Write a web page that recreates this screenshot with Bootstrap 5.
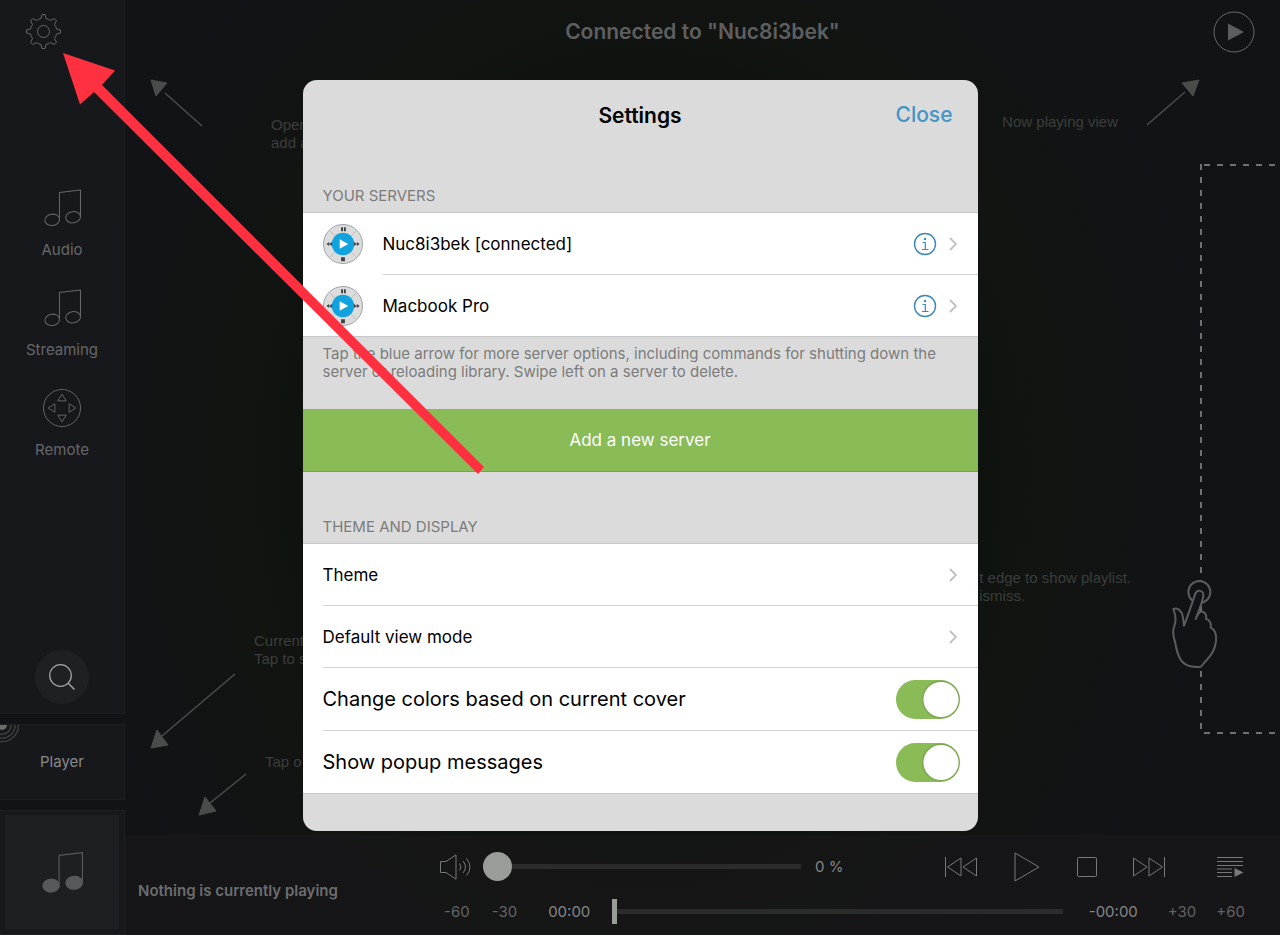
<!DOCTYPE html>
<html lang="en">
<head>
<meta charset="utf-8">
<meta name="viewport" content="width=device-width, initial-scale=1">
<title>Settings</title>
<link href="https://cdn.jsdelivr.net/npm/bootstrap@5.3.0/dist/css/bootstrap.min.css" rel="stylesheet">
<style>
  body { font-family: Inter, "Liberation Sans", sans-serif; font-size: 15px; line-height: 18px; background: #121316; color: #66676a; overflow-x: hidden; }
  svg { display: block; flex: none; }
  .app { background: radial-gradient(ellipse 44% 70% at 50% 50%, #0d120d 50%, #111411 72%, #121316); }
  .line-art { fill: none; stroke: currentColor; stroke-width: 1; stroke-linejoin: round; }
  .plain { background: none; border: 0; padding: 0; color: inherit; text-decoration: none; }

  /* Left rail */
  .rail { width: 125px; gap: 10px; flex: none; }
  .panel { background: #17181c; border: 1px solid #1e1f23; border-left: 0; }
  .rail-top { border-top: 0; padding-bottom: 9px; }
  .rail-gear { margin: 13px 0 0 25px; }
  .rail-nav { padding-top: 139px; }
  .rail-nav a { height: 100px; gap: 14px; }
  .search-btn { width: 54px; height: 54px; background: #1f2024; color: #a2a2a4; }
  .rail-player { height: 76px; color: #88898c; }
  .rail-player svg { position: absolute; left: 0; top: 0; }
  .rail-cover { height: 125px; padding: 4px 5px 5px 5px; }
  .cover-art { background: #1e1f23; color: #58595c; }

  /* Stage */
  .stage-head { height: 63px; padding: 0 25px; }
  .stage-head h1 { font-size: 21px; line-height: 26px; color: #5e5f61; }
  .side { width: 42px; }
  .hint { position: absolute; font-family: "Liberation Sans", Arial, sans-serif; font-size: 15px; line-height: 18px; color: #3b3e3c; white-space: nowrap; }
  .arrow { position: absolute; color: #4a4b4b; fill: currentColor; stroke: currentColor; }
  .drop-zone { position: absolute; right: 0; top: 164px; bottom: 201px; width: 80px;
    background:
      repeating-linear-gradient(180deg, #6f7072 0 6px, transparent 6px 13px) left top / 2px 100% no-repeat,
      repeating-linear-gradient(90deg, transparent 0 4px, #6f7072 4px 10px, transparent 10px 13px) left top / 100% 2px no-repeat,
      repeating-linear-gradient(90deg, transparent 0 4px, #6f7072 4px 10px, transparent 10px 13px) left bottom / 100% 2px no-repeat; }
  .hand { position: absolute; right: 60px; bottom: 265px; color: #5b5c60; }

  /* Transport bar */
  .transport { height: 100px; padding: 0 35px 0 13px; background: rgba(25, 24, 26, .6); }
  .track { width: 302px; padding-top: 47px; font-weight: 600; flex: none; color: #6c6d6e; }
  .controls { padding-top: 9px; }
  .ctl-row { height: 45px; }
  .ctl { color: #77787a; }
  .skip { color: #626365; }
  .clock { color: #858687; }
  .slide { appearance: none; background: none; height: 30px; margin: 0; min-width: 0; flex: 1 1 0; }
  .slide::-webkit-slider-runnable-track { height: 5px; background: #2a2b2b; }
  .slide::-webkit-slider-thumb { appearance: none; background: #9a9c99; border: 0; }
  .volume::-webkit-slider-thumb { width: 29px; height: 29px; border-radius: 50%; margin-top: -12px; }
  .seek::-webkit-slider-thumb { width: 5px; height: 25px; margin-top: -10px; }

  /* Settings sheet */
  .sheet { max-width: 675px; margin: 80px auto 105px; }
  .sheet .modal-content { background: #dbdbdb; border: 0; border-radius: 14px; overflow: hidden; color: #000; padding-bottom: 37px; }
  .sheet-head { height: 71px; padding: 0 25px; }
  .sheet-head h2 { font-size: 21px; line-height: 26px; }
  .sheet-head .side-col { flex: 1 1 0; }
  .close-link { color: #4595c5; font-weight: 500; font-size: 21px; }
  .group-title { font-size: 15px; line-height: 18px; font-weight: 400; color: #7c7c7c; margin: 0; padding: 36px 20px 7px; }
  .group-title.later { padding-top: 46px; }
  .group { background: #fff; border: solid #c8c8ca; border-width: 1px 0; font-size: 17px; line-height: 22px; }
  .entry { height: 62px; padding-right: 18px; border-bottom: 1px solid #d4d4d6; }
  .entry.tall { height: 63px; }
  .server { padding-left: 20px; }
  .server:last-child .entry { height: 61px; border-bottom: 0; }
  .option { margin-left: 20px; color: #000; text-decoration: none; }
  .option:last-child { height: 62px; border-bottom: 0; }
  .big { font-size: 20px; }
  .chev { color: #c0c0c4; margin-right: 3px; }
  .info { color: #3c88b4; margin-right: 12px; }
  .note { font-size: 15px; line-height: 18px; color: #7b7b7b; padding: 8px 20px 28px; margin: 0; }
  .add-btn { height: 63px; background: #89bb56; border: 0; border-bottom: 1px solid #78a04f; color: #fff; font-size: 17px; }
  .entry.form-switch { padding-left: 0; }
  .form-switch .form-check-input.toggle { width: 64px; height: 39px; margin: 0; border: 0; border-radius: 20px; background: radial-gradient(circle at 45px 50%, #fff 17px, #7ea552 18px, #89bb56 20px); }
  .pointer { position: absolute; left: 0; top: 0; z-index: 1060; pointer-events: none; }
</style>
</head>
<body>
<svg class="d-none">
  <symbol id="note" viewBox="0 0 36 36">
    <path d="M15 28V3L35.500 .5V26"/><ellipse cx="8" cy="29.500" rx="7.200" ry="5.500" transform="rotate(-8 8 29.500)"/><ellipse cx="28.300" cy="27" rx="7.200" ry="5.500" transform="rotate(-8 28.300 27)"/>
  </symbol>
  <symbol id="server" viewBox="0 0 42 42">
    <circle cx="21" cy="21" r="20.500" fill="#dcdcdc" stroke="#9aa0a4"/>
    <path d="M7 7l6 6M35 7l-6 6M7 35l6-6M35 35l-6-6" stroke="#b9bdbf"/>
    <circle cx="21" cy="21" r="11.800" fill="#11a3de"/><path d="M17.500 16v10l9-5z" fill="#fff"/>
    <path d="M19 3.500h2v4h-2zM22 3.500h2v4h-2zM19 35h4v4h-4zM3.500 21l3-2v4zM6.500 21l3-2v4zM38.500 21l-3-2v4zM35.500 21l-3-2v4z" fill="#3f4143"/>
  </symbol>
  <symbol id="info" viewBox="0 0 24 24">
    <circle cx="12" cy="12" r="10.500" fill="none" stroke="currentColor" stroke-width="1.400"/>
    <circle cx="12" cy="7" r="1.200" fill="currentColor"/><path d="M9.500 10.500h2.800v7M9 17.500h6.500" fill="none" stroke="currentColor" stroke-width="1.200"/>
  </symbol>
  <symbol id="chev" viewBox="0 0 8 14"><path d="M1 1l6 6-6 6" fill="none" stroke="currentColor" stroke-width="1.800"/></symbol>
</svg>

<div class="app d-flex min-vh-100 position-relative overflow-hidden">
  <aside class="rail d-flex flex-column">
    <div class="panel rail-top d-flex flex-column flex-grow-1">
      <button class="plain rail-gear align-self-start" aria-label="Settings">
        <svg class="line-art" width="37" height="37" viewBox="-18.500 -18.500 37 37"><circle r="6"/><path d="M-2.500-13 L-1.500-17H1.500L2.500-13Q5-12.500 7-11L10.800-13 13-10.800 11-7Q12.500-5 13-2.500L17-1.500V1.500L13 2.500Q12.500 5 11 7L13 10.800 10.800 13 7 11Q5 12.500 2.500 13L1.500 17H-1.500L-2.500 13Q-5 12.500-7 11L-10.800 13-13 10.800-11 7Q-12.500 5-13 2.500L-17 1.500V-1.500L-13-2.500Q-12.500-5-11-7L-13-10.800-10.800-13-7-11Q-5-12.500-2.500-13Z"/></svg>
      </button>
      <nav class="rail-nav d-flex flex-column">
        <a href="#" class="plain d-flex flex-column align-items-center"><svg class="line-art" width="37" height="38"><use href="#note"/></svg>Audio</a>
        <a href="#" class="plain d-flex flex-column align-items-center"><svg class="line-art" width="37" height="38"><use href="#note"/></svg>Streaming</a>
        <a href="#" class="plain d-flex flex-column align-items-center"><svg class="line-art" width="40" height="38" viewBox="0 0 40 40"><circle cx="20" cy="20" r="19.500"/><path d="M20 5.500l4.500 7h-9zM20 34.500l4.500-7h-9zM5.500 20l7-4.500v9zM34.500 20l-7-4.500v9z"/></svg>Remote</a>
      </nav>
      <button class="plain search-btn rounded-circle mt-auto mx-auto d-flex align-items-center justify-content-center" aria-label="Search">
        <svg class="line-art" width="28" height="28" viewBox="0 0 28 28"><circle cx="12.500" cy="12.500" r="10.800" stroke-width="1.300"/><path d="M20 20l6.500 6.500" stroke-width="1.500"/></svg>
      </button>
    </div>
    <button class="panel rail-player position-relative p-0 text-center">
      <svg width="20" height="20" fill="none"><circle cx="2" cy="0" r="5" fill="#6b6c6b"/><path d="M11 0a9 9 0 0 1-11 9M15 0a13 13 0 0 1-15 13M18.500 0A16.500 16.500 0 0 1 0 16.500" stroke="#3d3f3e" stroke-width="1.500"/></svg>
      Player
    </button>
    <div class="panel rail-cover d-flex">
      <div class="cover-art flex-grow-1 d-flex align-items-center justify-content-center">
        <svg class="line-art" width="41" height="41" viewBox="0 0 36 36"><use href="#note" width="36" height="36"/><ellipse cx="8" cy="29.500" rx="7" ry="5.500" fill="currentColor"/><ellipse cx="28.300" cy="27" rx="7" ry="5.500" fill="currentColor"/></svg>
      </div>
    </div>
  </aside>

  <div class="d-flex flex-column flex-grow-1">
    <header class="stage-head d-flex align-items-center">
      <span class="side"></span>
      <h1 class="flex-grow-1 text-center fw-semibold m-0">Connected to "Nuc8i3bek"</h1>
      <button class="plain side" aria-label="Now playing">
        <svg width="42" height="42" viewBox="0 0 42 42"><circle cx="21" cy="21" r="20" class="line-art"/><path d="M15 12.500v17l16-8.500z" fill="#5c5d5f"/></svg>
      </button>
    </header>
    <main class="flex-grow-1"></main>
    <footer class="transport d-flex">
      <div class="track">Nothing is currently playing</div>
      <div class="controls flex-grow-1">
        <div class="ctl-row ctl d-flex align-items-center">
          <button class="plain me-2 pe-1" aria-label="Mute"><svg class="line-art" width="31" height="26" viewBox="0 0 31 26"><path d="M.5 7.500H6L16 .8V25.200L6 18.500H.5zM19.500 9.500q3 3.500 0 7M23 7q5 6 0 12M26.500 4.500q7 8.500 0 17"/></svg></button>
          <input class="slide volume" type="range" min="0" max="100" value="0" aria-label="Volume">
          <span class="clock text-nowrap" style="padding-left:14px;width:144px">0 %</span>
          <button class="plain" aria-label="Previous"><svg class="line-art" width="32" height="22" viewBox="0 0 32 22"><path d="M.5 1v20M16 2v18L2.500 11zM31.500 2v18L18 11z"/></svg></button>
          <button class="plain" style="margin-left:37px" aria-label="Play"><svg class="line-art" width="26" height="30" viewBox="0 0 26 30"><path d="M1 1v28l24-14z"/></svg></button>
          <button class="plain" style="margin-left:37px" aria-label="Stop"><svg class="line-art" width="20" height="20" viewBox="0 0 20 20"><rect x=".5" y=".5" width="19" height="19" rx="1"/></svg></button>
          <button class="plain" style="margin-left:36px" aria-label="Next"><svg class="line-art" width="32" height="22" viewBox="0 0 32 22"><path d="M31.500 1v20M.5 2v18L14 11zM16 2v18L29.500 11z"/></svg></button>
          <button class="plain" style="margin-left:52px" aria-label="Queue"><svg width="28" height="22" viewBox="0 0 28 22"><path d="M0 1.500h26M0 5.500h26M0 9.500h26M0 13h15M0 16.500h15M0 20.500h15" stroke="currentColor" stroke-width="1.200"/><path d="M17.500 12v9l9-4.500z" fill="currentColor"/></svg></button>
        </div>
        <div class="ctl-row skip d-flex align-items-center text-nowrap">
          <button class="plain ms-1">-60</button>
          <button class="plain" style="margin-left:22px">-30</button>
          <span class="clock" style="margin:0 22px 0 31px">00:00</span>
          <input class="slide seek" type="range" min="0" max="100" value="0" aria-label="Position">
          <span class="clock" style="margin-left:26px">-00:00</span>
          <button class="plain" style="margin-left:30px">+30</button>
          <button class="plain" style="margin-left:20px">+60</button>
        </div>
      </div>
    </footer>
  </div>

  <!-- First-run coach marks over the stage -->
  <div class="hint" style="left:271px;top:116px">Open<br>add a</div>
  <svg class="arrow" style="left:150px;top:79px" width="53" height="49"><path d="M15 14L52 47" stroke-width="1.600"/><path d="M1 1l16 3-11 13z"/></svg>
  <div class="hint" style="right:162px;top:113px">Now playing view</div>
  <svg class="arrow" style="right:80px;top:79px" width="54" height="48"><path d="M39 13L1 46" stroke-width="1.600"/><path d="M53 1L36 4 47 17z"/></svg>
  <div class="hint" style="left:254px;bottom:267px">Current<br>Tap to s</div>
  <svg class="arrow" style="left:150px;bottom:186px" width="86" height="76"><path d="M12 63L85 1" stroke-width="1.600"/><path d="M1 75L7 57 18 72z"/></svg>
  <div class="hint" style="left:265px;bottom:164px">Tap o</div>
  <svg class="arrow" style="left:198px;bottom:119px" width="50" height="43"><path d="M12 30L48 1" stroke-width="1.600"/><path d="M1 42L7 24 18 38z"/></svg>
  <div class="drop-zone"></div>
  <svg class="hand" width="50" height="92" viewBox="870 115 150 276" stroke="currentColor" stroke-width="6" fill="#121316" stroke-linejoin="round" stroke-linecap="round"><circle cx="958" cy="157" r="33"/><path d="M912 258C925 225 935 195 945 165C950 148 972 150 970 170C965 195 955 215 947 238L955 222C965 208 982 220 978 238C990 240 994 252 992 264C1005 270 1010 285 1008 305C1004 340 985 355 972 370Q965 380 962 381C935 384 915 378 903 362C890 340 888 325 886 310C880 290 878 285 880 270C888 245 890 235 880 208C890 203 900 210 906 222C910 232 910 245 912 258"/></svg>
  <div class="hint" style="right:149px;bottom:330px">t edge to show playlist.<br>ismiss.</div>

  <div class="modal d-block position-absolute" role="dialog" aria-labelledby="sheet-title">
    <div class="modal-dialog sheet">
      <div class="modal-content">
        <div class="sheet-head d-flex align-items-center">
          <span class="side-col"></span>
          <h2 id="sheet-title" class="fw-semibold m-0">Settings</h2>
          <span class="side-col text-end"><button class="plain close-link">Close</button></span>
        </div>
        <h3 class="group-title">YOUR SERVERS</h3>
        <div class="group">
          <div class="server d-flex align-items-center">
            <svg width="40" height="42" viewBox="0 0 42 42" class="me-3"><use href="#server"/></svg>
            <div class="entry flex-grow-1 d-flex align-items-center ms-1"><span class="me-auto">Nuc8i3bek [connected]</span>
              <button class="plain info" aria-label="Server details"><svg width="24" height="24"><use href="#info"/></svg></button><svg class="chev" width="8" height="14"><use href="#chev"/></svg></div>
          </div>
          <div class="server d-flex align-items-center">
            <svg width="40" height="42" viewBox="0 0 42 42" class="me-3"><use href="#server"/></svg>
            <div class="entry flex-grow-1 d-flex align-items-center ms-1"><span class="me-auto">Macbook Pro</span>
              <button class="plain info" aria-label="Server details"><svg width="24" height="24"><use href="#info"/></svg></button><svg class="chev" width="8" height="14"><use href="#chev"/></svg></div>
          </div>
        </div>
        <p class="note">Tap the blue arrow for more server options, including commands for shutting down the server or reloading library. Swipe left on a server to delete.</p>
        <button class="add-btn w-100">Add a new server</button>
        <h3 class="group-title later">THEME AND DISPLAY</h3>
        <div class="group">
          <a href="#" class="entry option d-flex align-items-center"><span class="me-auto">Theme</span><svg class="chev" width="8" height="14"><use href="#chev"/></svg></a>
          <a href="#" class="entry option d-flex align-items-center"><span class="me-auto">Default view mode</span><svg class="chev" width="8" height="14"><use href="#chev"/></svg></a>
          <div class="entry tall option form-switch d-flex align-items-center"><label class="big me-auto" for="colors">Change colors based on current cover</label><input class="form-check-input toggle" type="checkbox" role="switch" id="colors" checked></div>
          <div class="entry option form-switch d-flex align-items-center"><label class="big me-auto" for="popups">Show popup messages</label><input class="form-check-input toggle" type="checkbox" role="switch" id="popups" checked></div>
        </div>
      </div>
    </div>
  </div>

  <svg class="pointer" width="490" height="480" fill="#ff3040"><path d="M63 53L115 70.500 102 85 484 467 478 474 94 92 80 104.500z"/></svg>
</div>
<script src="https://cdn.jsdelivr.net/npm/bootstrap@5.3.0/dist/js/bootstrap.bundle.min.js"></script>
</body>
</html>
